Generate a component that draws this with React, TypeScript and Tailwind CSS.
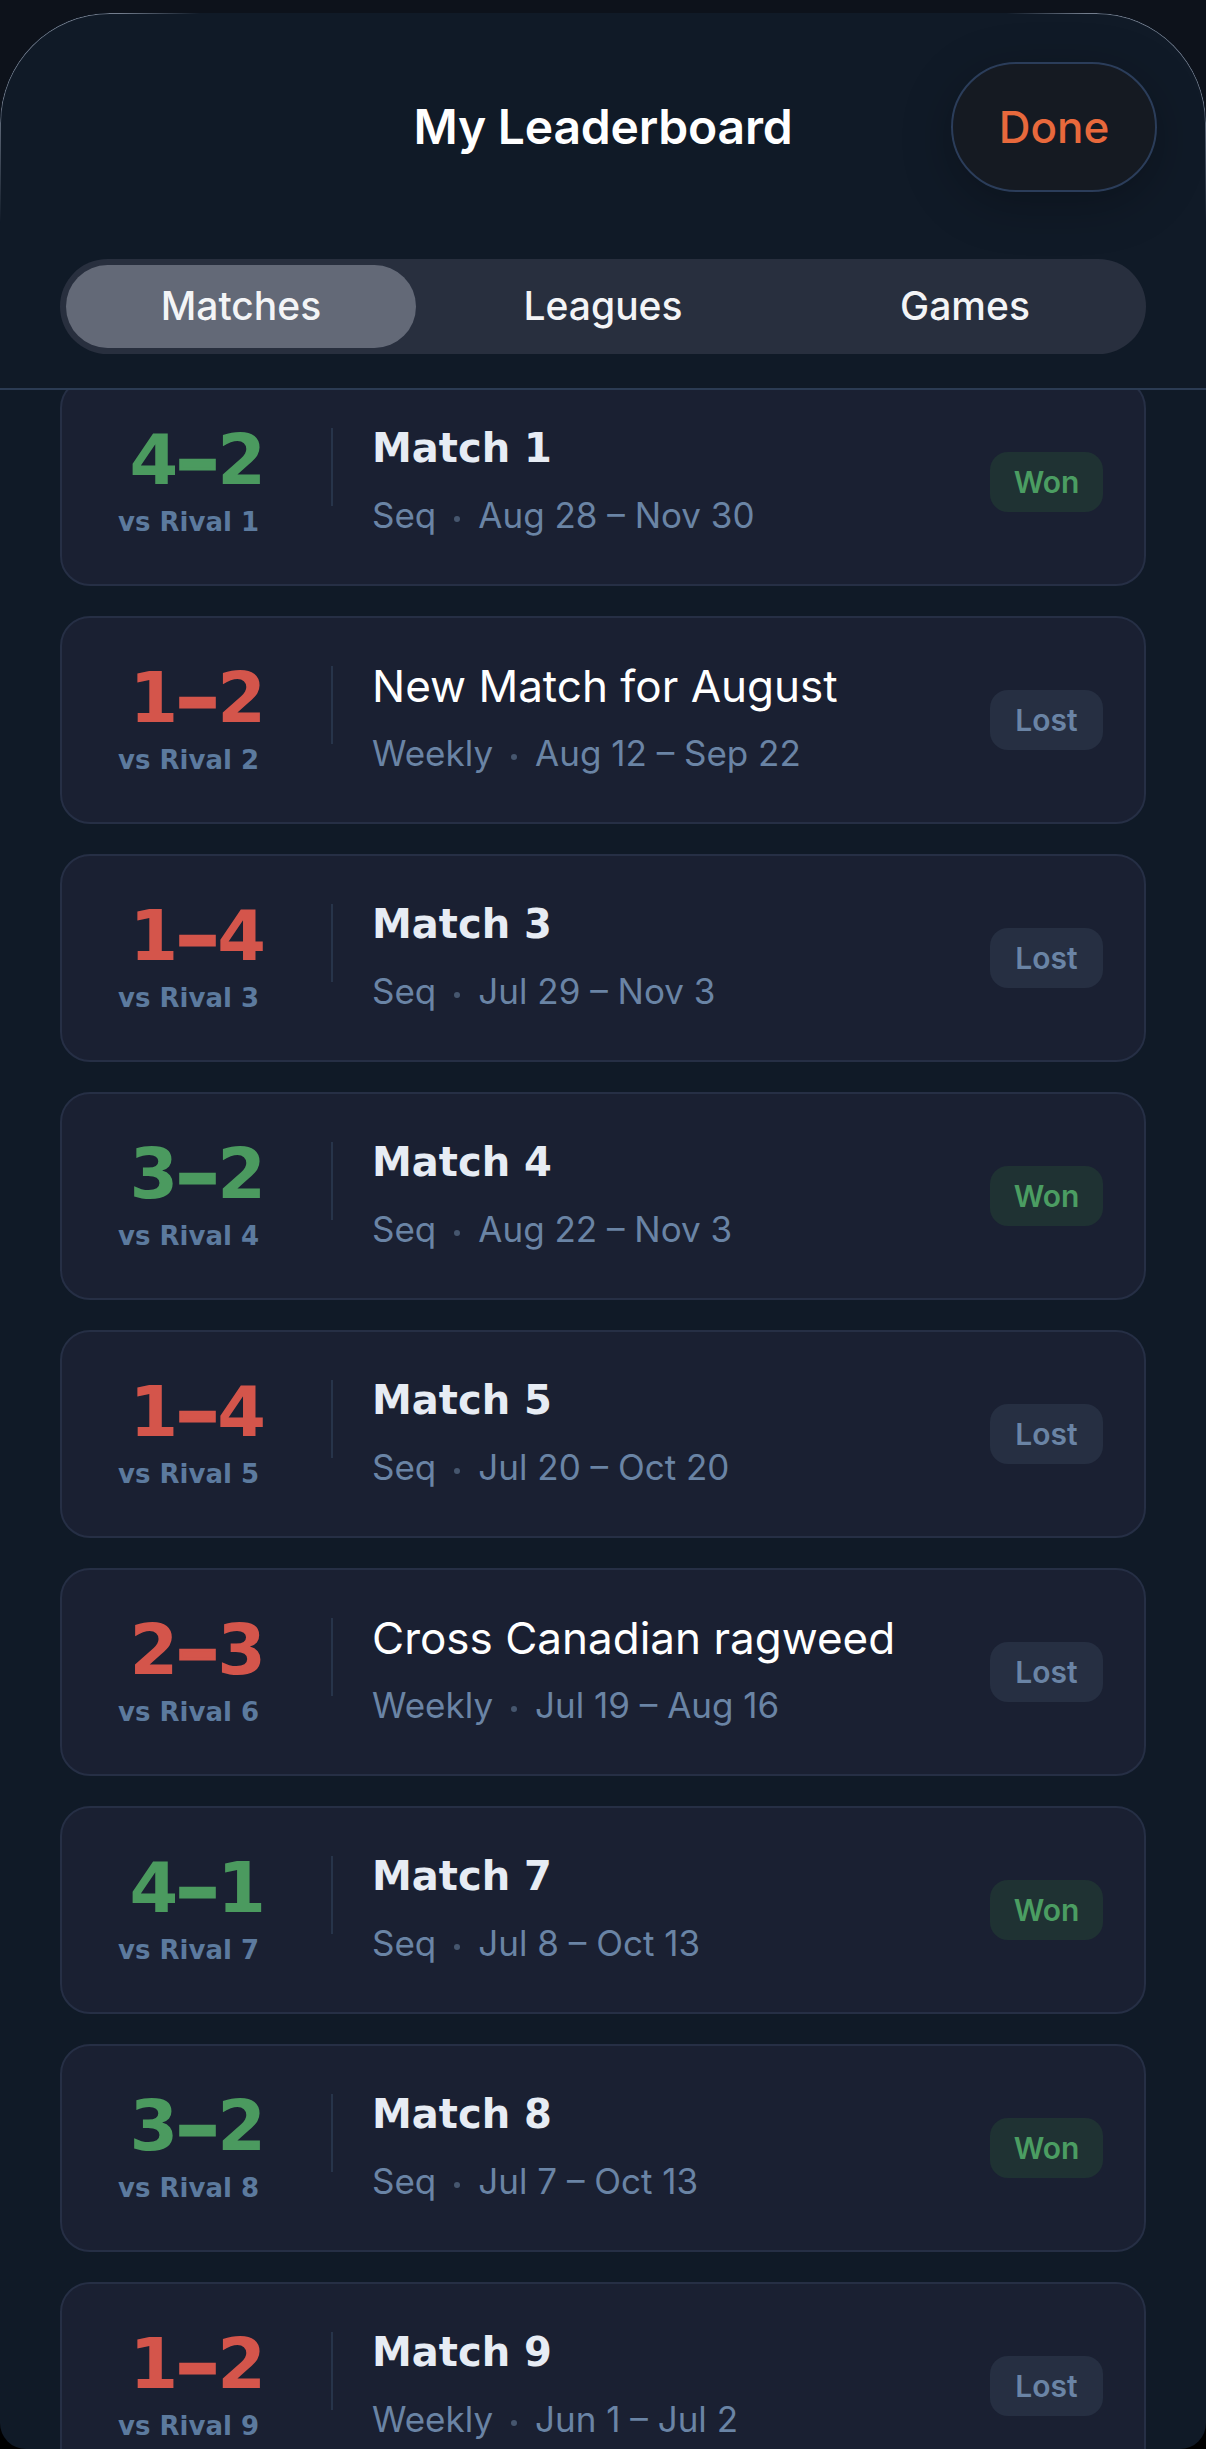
import React from "react";

type Match = {
  us: number;
  them: number;
  rival: string;
  title: string;
  plain?: boolean;
  kind: string;
  range: string;
};

const matches: Match[] = [
  { us: 4, them: 2, rival: "Rival 1", title: "Match 1", kind: "Seq", range: "Aug 28 – Nov 30" },
  { us: 1, them: 2, rival: "Rival 2", title: "New Match for August", plain: true, kind: "Weekly", range: "Aug 12 – Sep 22" },
  { us: 1, them: 4, rival: "Rival 3", title: "Match 3", kind: "Seq", range: "Jul 29 – Nov 3" },
  { us: 3, them: 2, rival: "Rival 4", title: "Match 4", kind: "Seq", range: "Aug 22 – Nov 3" },
  { us: 1, them: 4, rival: "Rival 5", title: "Match 5", kind: "Seq", range: "Jul 20 – Oct 20" },
  { us: 2, them: 3, rival: "Rival 6", title: "Cross Canadian ragweed", plain: true, kind: "Weekly", range: "Jul 19 – Aug 16" },
  { us: 4, them: 1, rival: "Rival 7", title: "Match 7", kind: "Seq", range: "Jul 8 – Oct 13" },
  { us: 3, them: 2, rival: "Rival 8", title: "Match 8", kind: "Seq", range: "Jul 7 – Oct 13" },
  { us: 1, them: 2, rival: "Rival 9", title: "Match 9", kind: "Weekly", range: "Jun 1 – Jul 2" },
];

const inter = "font-['Inter','Noto_Sans',sans-serif]";
const dejavu = "font-['DejaVu_Sans','Verdana',sans-serif]";

function MatchCard({ m }: { m: Match }) {
  const won = m.us > m.them;
  return (
    <div className="flex h-[208px] shrink-0 items-center rounded-[30px] border-2 border-[#262f45] bg-[#1a2032]">
      {/* score + opponent */}
      <div className={`flex w-[197px] flex-col items-end ${dejavu} font-bold`}>
        <div
          className={`mr-[-7px] flex items-baseline text-[70px] leading-[66px] ${
            won ? "text-[#4b9a5f]" : "text-[#d4554b]"
          }`}
        >
          <span>{m.us}</span>
          <span className="mx-[2px] inline-block scale-x-[1.2] [-webkit-text-stroke:3px_currentColor]">–</span>
          <span>{m.them}</span>
        </div>
        <div className="mt-[14px] text-[26px] leading-[30px] text-[#5c7a9e]">vs {m.rival}</div>
      </div>

      <div className="mb-[31px] ml-[72px] h-[78px] w-[2px] shrink-0 bg-[#27344a]" />

      {/* name + schedule */}
      <div className={`mb-[4px] ml-[39px] flex min-w-0 flex-1 flex-col ${inter}`}>
        {m.plain ? (
          <div className="h-[48px] whitespace-nowrap text-[44px] leading-[48px] text-white">{m.title}</div>
        ) : (
          <div className={`h-[48px] whitespace-nowrap ${dejavu} text-[40px] font-bold leading-[48px] text-[#e7ecf4]`}>
            {m.title}
          </div>
        )}
        <div className="mt-[22px] flex items-center text-[35px] leading-[42px] text-[#6a84a5]">
          <span>{m.kind}</span>
          <span className="mx-[18px] mt-[7px] h-[6px] w-[6px] rounded-full bg-[#46566e]" />
          <span>{m.range}</span>
        </div>
      </div>

      <div
        className={`mr-[41px] flex h-[60px] w-[113px] shrink-0 items-center justify-center rounded-[18px] ${inter} text-[30px] font-semibold ${
          won ? "bg-[#1f3233] text-[#4b9d62]" : "bg-[#262f42] text-[#6a84a5]"
        }`}
      >
        {won ? "Won" : "Lost"}
      </div>
    </div>
  );
}

export default function App() {
  return (
    <div className="h-[2449px] w-full overflow-hidden bg-[linear-gradient(#0d121b_0px,#0d121b_400px,#000_400px)] pt-[13px]">
      <div className="relative flex h-[2436px] flex-col overflow-hidden rounded-t-[110px] rounded-b-[26px] bg-[#101a27]">
        {/* sheet edge highlight along the rounded top corners */}
        <div className="pointer-events-none absolute inset-x-0 top-0 z-20 h-[230px] [mask-image:linear-gradient(to_right,#000_0px,#000_120px,transparent_200px,transparent_calc(100%_-_200px),#000_calc(100%_-_120px),#000_100%)]">
          <div className="h-full rounded-t-[110px] border-x border-t border-[#737d8d] [mask-image:linear-gradient(to_bottom,#000_0px,#000_80px,transparent_210px)]" />
        </div>

        <header className="relative z-10 bg-[#101a27]">
          <div className="mt-[49px] grid h-[130px] grid-cols-[1fr_auto_1fr] items-center px-[49px]">
            <div />
            <h1 className={`${inter} text-[48px] font-semibold tracking-[-0.2px] text-white`}>My Leaderboard</h1>
            <button
              className={`flex h-[130px] w-[206px] items-center justify-center justify-self-end rounded-full border-2 border-[#2b3d5a] bg-[#151a22] shadow-[0_12px_50px_rgba(0,0,0,0.25)] ${inter} text-[44px] font-medium text-[#e8693c]`}
            >
              Done
            </button>
          </div>

          <div
            className={`mx-[60px] mt-[67px] flex h-[95px] gap-[12px] rounded-full bg-[#282f3e] p-[6px] ${inter} text-[39px] font-medium text-[#f3f4f6]`}
          >
            <div className="flex flex-1 items-center justify-center rounded-full bg-[#636977]">Matches</div>
            <div className="flex flex-1 items-center justify-center">Leagues</div>
            <div className="flex flex-1 items-center justify-center">Games</div>
          </div>

          <div className="mt-[34px] h-[2px] bg-[#2b3b53]" />
        </header>

        <div className="mx-[60px] -mt-[12px] flex flex-col gap-[30px]">
          {matches.map((m) => (
            <MatchCard key={m.rival} m={m} />
          ))}
        </div>
      </div>
    </div>
  );
}
